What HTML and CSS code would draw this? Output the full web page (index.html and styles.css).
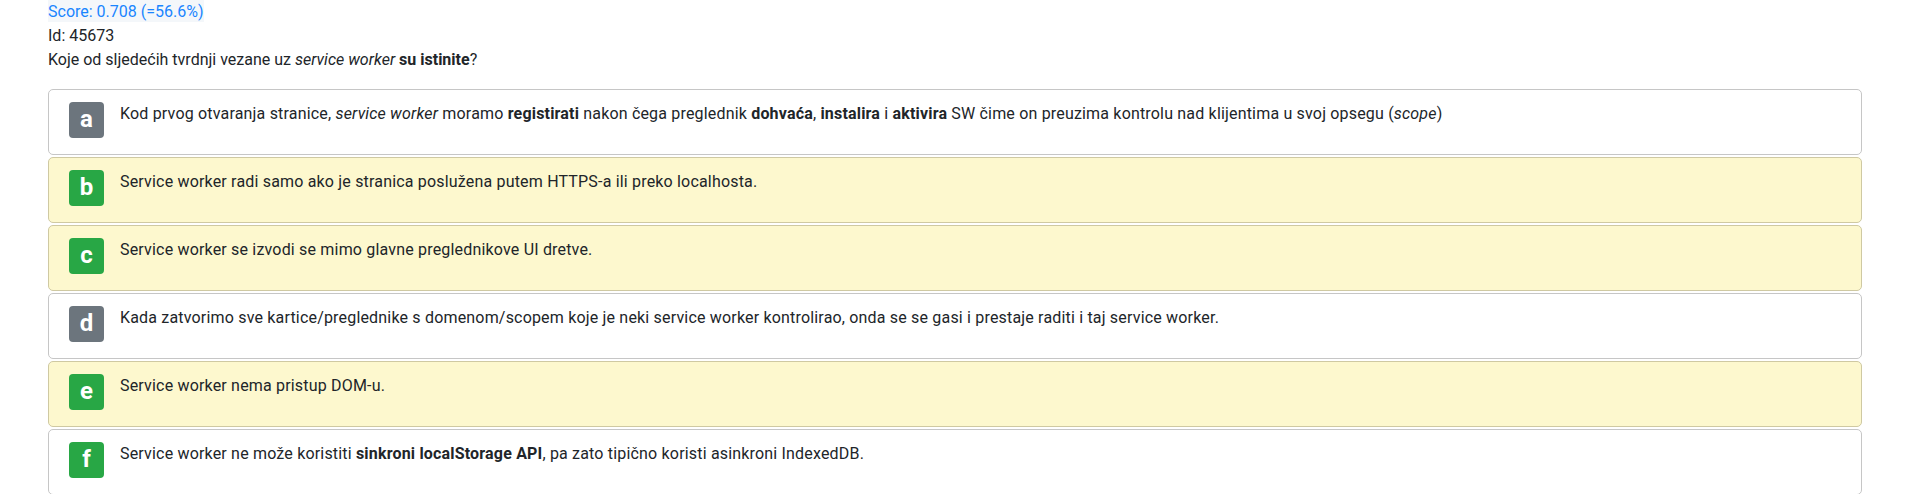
FILE: index.html
```html
<!DOCTYPE html>
<html lang="hr">
<head>
<meta charset="utf-8">
<title>Pitanje 45673</title>
<link rel="stylesheet" href="styles.css">
</head>
<body>
<div class="page">
  <div class="score-line"><span class="score">Score: 0.708 (=56.6%)</span></div>
  <div class="id-line">Id: 45673</div>
  <div class="question">Koje od sljedećih tvrdnji vezane uz <em>service worker</em> <strong>su istinite</strong>?</div>
  <div class="answers">
    <div class="answer">
      <span class="badge badge-grey">a</span>
      <div class="answer-text">Kod prvog otvaranja stranice, <em>service worker</em> moramo <strong>registirati</strong> nakon čega preglednik <strong>dohvaća</strong>, <strong>instalira</strong> i <strong>aktivira</strong> SW čime on preuzima kontrolu nad klijentima u svoj opsegu (<em>scope</em>)</div>
    </div>
    <div class="answer answer-correct">
      <span class="badge badge-green">b</span>
      <div class="answer-text">Service worker radi samo ako je stranica poslužena putem HTTPS-a ili preko localhosta.</div>
    </div>
    <div class="answer answer-correct">
      <span class="badge badge-green">c</span>
      <div class="answer-text">Service worker se izvodi se mimo glavne preglednikove UI dretve.</div>
    </div>
    <div class="answer">
      <span class="badge badge-grey">d</span>
      <div class="answer-text">Kada zatvorimo sve kartice/preglednike s domenom/scopem koje je neki service worker kontrolirao, onda se se gasi i prestaje raditi i taj service worker.</div>
    </div>
    <div class="answer answer-correct">
      <span class="badge badge-green">e</span>
      <div class="answer-text">Service worker nema pristup DOM-u.</div>
    </div>
    <div class="answer">
      <span class="badge badge-green">f</span>
      <div class="answer-text">Service worker ne može koristiti <strong>sinkroni localStorage API</strong>, pa zato tipično koristi asinkroni IndexedDB.</div>
    </div>
  </div>
</div>
</body>
</html>
```

FILE: styles.css
```css
html, body {
  margin: 0;
  padding: 0;
  background: #ffffff;
}

body {
  font-family: Roboto, "Noto Sans", "DejaVu Sans", sans-serif;
  font-size: 16px;
  line-height: 24px;
  color: #212529;
}

.page {
  padding: 0 48px;
}

.score-line {
  height: 24px;
}

.score {
  display: inline-block;
  background: #f4f7fa;
  color: #1a85ff;
  line-height: 21px;
  padding-top: 1px;
}

.id-line,
.question {
  height: 24px;
}

.question {
  margin-bottom: 17px;
}

.answers {
  display: flex;
  flex-direction: column;
  gap: 2px;
}

.answer {
  display: flex;
  align-items: flex-start;
  gap: 16px;
  border: 1px solid #c6c6c6;
  border-radius: 5px;
  background: #ffffff;
  padding: 12px 19px 16px 20px;
  min-height: 36px;
}

.answer-correct {
  background: #fdf8ce;
  border-color: #cfc9a2;
}

.badge {
  flex: 0 0 auto;
  display: flex;
  align-items: center;
  justify-content: center;
  width: 35px;
  height: 36px;
  border-radius: 4px;
  color: #ffffff;
  font-weight: 700;
  font-size: 24px;
  line-height: 1;
  padding-bottom: 2px;
  box-sizing: border-box;
}

.badge-grey {
  background: #6c757d;
}

.badge-green {
  background: #28a745;
}

.answer-text {
  letter-spacing: 0.18px;
}

strong {
  font-weight: 700;
}
```
